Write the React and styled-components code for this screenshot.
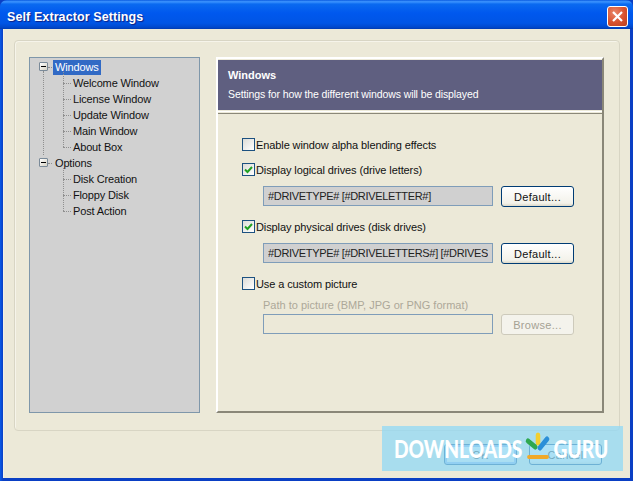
import React from "react";
import styled, { createGlobalStyle } from "styled-components";

const UI = `"Liberation Sans", "Noto Sans", sans-serif`;
const Global = createGlobalStyle`
  html, body { margin: 0; padding: 0; background: #0a3fc4; }
  body { width: 633px; height: 481px; overflow: hidden; font-family: ${UI}; }
  * { box-sizing: border-box; }
`;
const Win = styled.div`
  position: relative; width: 633px; height: 481px; display: flex; flex-direction: column;
  background: linear-gradient(90deg, #0a5ae8 0, #0a3fc4 3px, #0a3fc4 630px, #0a3fc4 100%); border-radius: 7px 7px 0 0; overflow: hidden;
`;
const TitleBar = styled.div`
  height: 29px; flex: none; display: flex; align-items: center; justify-content: space-between;
  padding: 3px 5px 0 7px;
  background: linear-gradient(180deg, #0a5be0 0%, #3d95ff 6%, #0a6af0 14%, #0058ee 45%, #0055e5 80%, #0048cc 94%, #003bb0 100%);
`;
const Title = styled.div`
  font: bold 12.5px "Liberation Sans", sans-serif; letter-spacing: 0.1px; color: #fff; text-shadow: 1px 1px 1px #0f1f80; padding-top: 2px;
`;
const CloseBtn = styled.div`
  width: 21px; height: 21px; border: 1px solid #fff; border-radius: 3px; display: flex; align-items: center; justify-content: center;
  background: radial-gradient(circle at 35% 30%, #e9876a, #d8512e 55%, #b8401f);
`;
const Body = styled.div`
  flex: 1; min-height: 0; margin: 0 3px 3px; background: #ece9d8; display: flex; flex-direction: column;
  padding: 11px 10px 0; border-left: 1px solid #f3f1e6;
`;
const Group = styled.div`
  height: 391px; flex: none; border: 1px solid #d8d5c4; border-radius: 4px; display: flex; gap: 16px;
  padding: 16px 15px 17px 14px; box-shadow: inset 1px 1px 0 #f6f4ea;
`;
const Tree = styled.div`
  width: 171px; flex: none; border: 1px solid #7f97aa; background: #d1d1d1; padding: 1px 0 0 9px; font-size: 11px; letter-spacing: -0.15px; color: #111;
  display: flex; flex-direction: column;
`;
const TreeRow = styled.div`
  height: 16px; display: flex; align-items: center; position: relative; padding-left: ${p => (p.$child ? 32 : 14)}px; white-space: nowrap;
`;
const Dots = styled.span`
  position: absolute; left: ${p => p.$x}px; top: ${p => p.$top}px; ${p => (p.$h ? `height:${p.$h}px;` : "")} ${p => (p.$w ? `width:${p.$w}px;` : "")}
  ${p => (p.$h ? "border-left: 1px dotted #8f8f8f;" : "border-top: 1px dotted #8f8f8f;")}
`;
const Expander = styled.span`
  position: absolute; left: 0; top: 3px; width: 9px; height: 9px; border: 1px solid #7a8a99; border-radius: 1px;
  background: linear-gradient(135deg, #fff, #d6d2c4); display: flex; align-items: center; justify-content: center; z-index: 1;
  &::after { content: ""; width: 5px; height: 1px; background: #000; }
`;
const TreeLabel = styled.span`
  padding: 1px 2px; line-height: 13px; ${p => (p.$sel ? "background:#316ac5; color:#fff;" : "")}
`;
const Panel = styled.div`
  flex: 1; border: 2px solid; border-color: #fff #8a8778 #8a8778 #fff; display: flex; flex-direction: column; background: #ece9d8;
`;
const Header = styled.div`
  height: 50px; flex: none; background: #5f5f80; color: #fff; padding: 9px 10px; margin-top: 1px;
  display: flex; flex-direction: column; gap: 6px; font-size: 10.5px; letter-spacing: -0.1px; line-height: 13px;
`;
const HeaderTitle = styled.div` font-weight: bold; font-size: 11px; letter-spacing: 0; `;
const Rule = styled.div` height: 3px; flex: none; border-top: 1px solid #fff; border-bottom: 1px solid #8a8778; background: #ece9d8; margin-top: 1px; `;
const Content = styled.div`
  flex: 1; padding: 24px 0 0 24px; display: flex; flex-direction: column; font-size: 11px; color: #111;
`;
const CheckRow = styled.div`
  display: flex; align-items: center; gap: 1px; height: 13px; margin-top: ${p => p.$mt || 0}px; white-space: nowrap; letter-spacing: -0.1px;
`;
const Box = styled.span`
  width: 13px; height: 13px; flex: none; border: 1px solid #1c5180; display: flex; align-items: center; justify-content: center;
  background: linear-gradient(135deg, #dcdcd7, #fff);
`;
const FieldRow = styled.div` display: flex; gap: 8px; margin: ${p => p.$mt || 0}px 0 0 21px; `;
const Field = styled.div`
  width: 230px; height: 20px; flex: none; border: 1px solid #7f9db9; background: ${p => (p.$off ? "#ece9d8" : "#d0d0d0")};
  padding: 0 4px; line-height: 18px; color: #222; display: flex; letter-spacing: -0.33px;
`;
const FieldText = styled.span` flex: 1; min-width: 0; overflow: hidden; white-space: nowrap; `;
const Btn = styled.div`
  width: 73px; height: 21px; flex: none; display: flex; align-items: center; justify-content: center; font-size: 11px; letter-spacing: 0.3px;
  border: 1px solid ${p => (p.$off ? "#cdcabb" : "#003c74")}; border-radius: 3px; color: ${p => (p.$off ? "#a5a294" : "#111")};
  background: ${p => (p.$off ? "#f4f3ec" : "linear-gradient(180deg,#fff,#f3f2ea 85%,#dcd8c8)")};
  ${p => (p.$def ? "box-shadow: inset 0 0 0 2px #8fb4e8;" : "")}
`;
const Hint = styled.div` color: #aca899; margin: 9px 0 0 21px; height: 13px; line-height: 13px; white-space: nowrap; `;
const Footer = styled.div` display: flex; justify-content: flex-end; gap: 12px; padding: 13px 18px 0 0; `;
const Watermark = styled.div`
  position: absolute; left: 382px; top: 426px; width: 241px; height: 45px; background: rgba(145, 216, 245, 0.75);
  display: flex; align-items: center; padding: 0 0 0 12px;
`;
const Brand = styled.div`
  display: flex; align-items: center; flex: none; color: #fff; font: 900 24px Lato, "Liberation Sans", sans-serif;
  transform: scaleX(0.8); transform-origin: left center; white-space: nowrap;
`;
const Logo = styled.svg` width: 34px; height: 28px; flex: none; margin: -6px 2.4px 0 2.4px; `;

const Check = () => (
  <svg width="11" height="11" viewBox="0 0 11 11"><path d="M2 5.5l2.5 2.5L9 3" fill="none" stroke="#21a121" strokeWidth="2" /></svg>
);
const Child = ({ children }) => (
  <TreeRow $child>
    <Dots $x={24} $top={8} $w={8} />
    <TreeLabel>{children}</TreeLabel>
  </TreeRow>
);

export default function App() {
  return (
    <Win>
      <Global />
      <TitleBar>
        <Title>Self Extractor Settings</Title>
        <CloseBtn>
          <svg width="13" height="13" viewBox="0 0 13 13"><path d="M2 2l9 9M11 2l-9 9" stroke="#fff" strokeWidth="2.2" /></svg>
        </CloseBtn>
      </TitleBar>
      <Body>
        <Group>
          <Tree>
            <TreeRow>
              <Expander />
              <Dots $x={4} $top={12} $h={84} />
              <Dots $x={9} $top={8} $w={4} />
              <TreeLabel $sel>Windows</TreeLabel>
              <Dots $x={24} $top={13} $h={75} />
            </TreeRow>
            <Child>Welcome Window</Child>
            <Child>License Window</Child>
            <Child>Update Window</Child>
            <Child>Main Window</Child>
            <Child>About Box</Child>
            <TreeRow>
              <Expander />
              <Dots $x={9} $top={8} $w={4} />
              <TreeLabel>Options</TreeLabel>
              <Dots $x={24} $top={13} $h={43} />
            </TreeRow>
            <Child>Disk Creation</Child>
            <Child>Floppy Disk</Child>
            <Child>Post Action</Child>
          </Tree>
          <Panel>
            <Header>
              <HeaderTitle>Windows</HeaderTitle>
              <div>Settings for how the different windows will be displayed</div>
            </Header>
            <Rule />
            <Content>
              <CheckRow><Box /><span>Enable window alpha blending effects</span></CheckRow>
              <CheckRow $mt={12}><Box><Check /></Box><span>Display logical drives (drive letters)</span></CheckRow>
              <FieldRow $mt={10}><Field><FieldText>#DRIVETYPE# [#DRIVELETTER#]</FieldText></Field><Btn>Default...</Btn></FieldRow>
              <CheckRow $mt={13}><Box><Check /></Box><span>Display physical drives (disk drives)</span></CheckRow>
              <FieldRow $mt={10}><Field><FieldText>#DRIVETYPE# [#DRIVELETTERS#] [#DRIVESIZE#]</FieldText></Field><Btn>Default...</Btn></FieldRow>
              <CheckRow $mt={13}><Box /><span>Use a custom picture</span></CheckRow>
              <Hint>Path to picture (BMP, JPG or PNG format)</Hint>
              <FieldRow $mt={2}><Field $off /><Btn $off>Browse...</Btn></FieldRow>
            </Content>
          </Panel>
        </Group>
        <Footer>
          <Btn $def>OK</Btn>
          <Btn>Cancel</Btn>
        </Footer>
      </Body>
      <Watermark>
        <Brand>
          DOWNLOADS
          <Logo viewBox="0 0 30 28" preserveAspectRatio="none">
            <path d="M15 3v8" stroke="#f2cf2e" strokeWidth="5" strokeLinecap="round" />
            <path d="M4 9l8 6" stroke="#2fa84f" strokeWidth="5" strokeLinecap="round" />
            <path d="M25 7l-8 9" stroke="#2b8fd8" strokeWidth="5" strokeLinecap="round" />
            <path d="M5 25h20" stroke="#f0a92a" strokeWidth="4" strokeLinecap="round" />
          </Logo>
          GURU
        </Brand>
      </Watermark>
    </Win>
  );
}
